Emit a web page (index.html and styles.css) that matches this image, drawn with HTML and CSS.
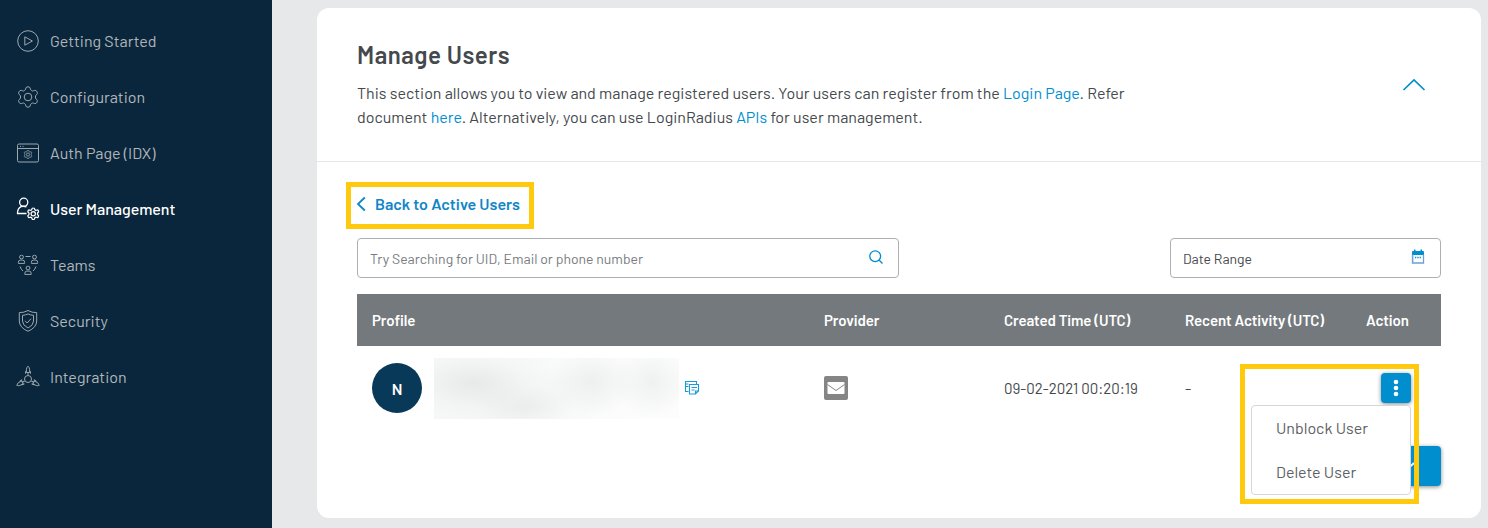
FILE: index.html
```html
<!DOCTYPE html>
<html lang="en">
<head>
<meta charset="utf-8">
<title>Manage Users</title>
<link rel="stylesheet" href="styles.css">
</head>
<body>
<svg class="defs" width="0" height="0">
  <symbol id="gear" viewBox="-11 -11 22 22">
    <path d="M-2.9-7Q-2.3-7.6-2.1-9Q-1.8-10.2 0-10.2T2.1-9Q2.3-7.6 2.9-7T4.6-6Q5.4-6 6.7-6.6T9-5.2T8.8-2.6Q7.7-1.8 7.5-1V1Q7.7 1.8 8.8 2.6T9 5.2T6.7 6.6Q5.4 6 4.6 6T2.9 7Q2.3 7.6 2.1 9Q1.8 10.2 0 10.2T-2.1 9Q-2.3 7.6-2.9 7T-4.6 6Q-5.4 6-6.7 6.6T-9 5.2T-8.8 2.6Q-7.7 1.8-7.5 1V-1Q-7.7-1.8-8.8-2.6T-9-5.2T-6.7-6.6Q-5.4-6-4.6-6T-2.9-7Z"/>
    <circle r="3.8"/>
  </symbol>
  <symbol id="person" viewBox="0 0 8 10"><circle cx="4" cy="2.5" r="1.9"/><path d="M.8 8.900V8q0-2.400 2-2.400h2.400q2 0 2 2.400v.9z"/></symbol>
  <symbol id="rocket" viewBox="0 0 6 10"><path d="M3 .7Q1.400 2 1.400 4v3h3.200V4Q4.600 2 3 .7zM1.400 5L.5 6.200v2M4.600 5l.9 1.200v2M3 7v2.600"/></symbol>
</svg>
<div class="app">
  <nav class="sidebar">
    <a class="nav-item"><svg class="nav-icon" viewBox="0 0 24 24"><circle cx="12" cy="12" r="10.300"/><path d="M8.800 7.800v8.400l7.600-4.200z"/></svg><span>Getting Started</span></a>
    <a class="nav-item"><svg class="nav-icon" viewBox="0 0 24 24"><use href="#gear" x="1" y="1" width="22" height="22"/></svg><span>Configuration</span></a>
    <a class="nav-item"><svg class="nav-icon" viewBox="0 0 24 24"><rect x="1.500" y="3" width="21" height="18" rx="1.500"/><path d="M2 7.500h20M4 5.400h1M6.500 5.400h1"/><use class="bold" href="#gear" x="7.500" y="9" width="9" height="9"/></svg><span>Auth Page (IDX)</span></a>
    <a class="nav-item active"><svg class="nav-icon" viewBox="0 0 24 24"><circle cx="7.700" cy="5.300" r="4.100"/><path d="M10.500 16.500h-9q0-5 3.500-6.800 2.700-1 5.500.3"/><use class="bold" href="#gear" x="11" y="10.500" width="12.500" height="12.500"/></svg><span>User Management</span></a>
    <a class="nav-item"><svg class="nav-icon" viewBox="0 0 24 24"><use href="#person" x="1.500" y="1.500" width="8" height="10"/><use href="#person" x="14.500" y="1.500" width="8" height="10"/><use href="#person" x="8" y="12.500" width="8" height="10"/><path d="M9.500 3.500h5M4 13.500q1 3 3 4.500M20 13.500q-1 3-3 4.500"/></svg><span>Teams</span></a>
    <a class="nav-item"><svg class="nav-icon" viewBox="0 0 24 24"><path d="M12 1.500q4 2.300 8.700 2.100v8.400q0 6.500-8.700 10.300Q3.300 18.500 3.300 12V3.600Q8 3.800 12 1.500z"/><path d="M12 4.900q2.700 1.400 5.500 1.400V12q0 4.300-5.500 7-5.500-2.700-5.500-7V6.300Q9.300 6.300 12 4.900zM9 11.800l2.200 2.200 3.800-4.300"/></svg><span>Security</span></a>
    <a class="nav-item"><svg class="nav-icon" viewBox="0 0 24 24"><circle cx="12" cy="14" r="3.500"/><use href="#rocket" x="9" y=".5" width="6" height="10"/><use href="#rocket" x="9" y=".5" width="6" height="10" transform="rotate(120 12 14)"/><use href="#rocket" x="9" y=".5" width="6" height="10" transform="rotate(240 12 14)"/></svg><span>Integration</span></a>
  </nav>
  <main class="content">
    <section class="card">
      <header class="card-header">
        <div class="intro">
          <h1>Manage Users</h1>
          <p><span class="line">This section allows you to view and manage registered users. Your users can register from the <a>Login Page</a>. Refer</span>
          <span class="line">document <a>here</a>. Alternatively, you can use LoginRadius <a>APIs</a> for user management.</span></p>
        </div>
        <svg class="collapse" viewBox="0 0 24 14"><path d="M1.500 12L12 2l10.500 10"/></svg>
      </header>
      <div class="card-body">
        <a class="back"><svg viewBox="0 0 10 16"><path d="M8.800 1.500L2 8l6.800 6.500"/></svg><span>Back to Active Users</span></a>
        <div class="filters">
          <div class="field search"><span>Try Searching for UID, Email or phone number</span><svg viewBox="0 0 16 16"><circle cx="7.200" cy="7.200" r="5.400"/><path d="M11.200 11.200l3.300 3.300"/></svg></div>
          <div class="field date"><span>Date Range</span><svg viewBox="0 0 16 16"><path class="solid" d="M3 2h10q1 0 1 1v3H3.200v7h-1.200V3q0-1 1-1zM4 .5h1.500V3H4zM10.500.5H12V3h-1.500z"/><path class="frame" d="M2.500 5.500v8.500h11V5.500"/><path d="M5 8.500h1.300M7.300 8.500h1.300M9.600 8.500h1.300"/></svg></div>
        </div>
        <div class="row head">
          <b>Profile</b><b>Provider</b><b>Created Time (UTC)</b><b>Recent Activity (UTC)</b><b>Action</b>
        </div>
        <div class="row user">
          <div class="profile">
            <span class="avatar">N</span><span class="redacted"></span>
            <svg class="copy" viewBox="0 0 16 16"><path d="M4.500 11.500h-3V1.500h11v2.500M2 4h2.500M2 6.500h2.500M5.500 4.500h9v6.500l-3 3h-6zM14.500 11h-3v3M7.500 7.500h5.500M7.500 10h3"/></svg>
          </div>
          <div><svg class="mail" viewBox="0 0 24 24"><rect class="tile" width="24" height="24" rx="2"/><rect class="paper" x="3.500" y="6" width="17" height="12" rx="1"/><path d="M3.500 8.500l8.500 6 8.500-6"/></svg></div>
          <div class="created">09-02-2021 00:20:19</div>
          <div>-</div>
          <div class="action">
            <button class="kebab"><svg viewBox="0 0 30 30"><circle cx="15" cy="9" r="2.300"/><circle cx="15" cy="15" r="2.300"/><circle cx="15" cy="21" r="2.300"/></svg></button>
            <div class="menu"><span>Unblock User</span><span>Delete User</span></div>
            <div class="highlight"></div>
          </div>
        </div>
        <div class="footer"><button class="next"><svg viewBox="0 0 16 16"><path d="M2 5l6 5.500L14 5"/></svg></button></div>
      </div>
    </section>
  </main>
</div>
</body>
</html>
```

FILE: styles.css
```css
* { box-sizing: border-box; }
body { margin: 0; font: 16px/24px Barlow, Roboto, sans-serif; color: #44494d; background: #e7e8ea; overflow: hidden; }
svg { fill: none; stroke: currentColor; flex: none; display: block; }
.defs { position: absolute; }
.app { display: flex; height: 528px; }
.sidebar { width: 272px; flex: none; background: #0a263d; padding-top: 13px; }
.nav-item { display: flex; align-items: center; height: 56px; padding-left: 16px; gap: 10px; color: #b1b6b9; white-space: nowrap; }
.nav-icon { width: 24px; height: 24px; stroke-width: 1; stroke: #9ca7ae; }
.bold { stroke-width: 2; }
.active { color: #fff; font-weight: 500; letter-spacing: -.04px; }
.active .nav-icon { stroke: #fff; stroke-width: 1.3; }
.active .bold { stroke-width: 2.2; }
.content { flex: 1; padding: 8px 7px 10px 45px; }
.card { height: 510px; background: #fff; border-radius: 12px; }
.card-header { height: 154px; padding: 31px 55px 0 40px; border-bottom: 1px solid #e5e6e7; display: flex; justify-content: space-between; }
h1 { margin: 0 0 11px; font-size: 24px; line-height: 31px; font-weight: 600; letter-spacing: .5px; }
p { margin: 0; }
.line { display: block; width: max-content; }
a { color: #008ecf; }
.nav-item.active { color: #fff; }
.collapse { width: 24px; height: 14px; margin-top: 39px; stroke: #008ecf; stroke-width: 1.7; }
.card-body { padding: 20px 40px 0; }
.back { display: flex; align-items: center; gap: 9px; width: 188px; height: 47px; margin-left: -11px; padding: 0 0 4px 5px; border: 5px solid #ffc90e; color: #0f86c8; font-weight: 600; white-space: nowrap; }
.back svg { width: 10px; height: 16px; stroke-width: 1.8; margin-top: 1px; }
.filters { display: flex; justify-content: space-between; margin-top: 9px; }
.field { display: flex; align-items: center; justify-content: space-between; height: 40px; padding: 2px 14px 0 12px; border: 1px solid #adb0b3; border-radius: 4px; font-size: 14px; white-space: nowrap; }
.search { width: 542px; color: #777c80; }
.date { width: 271px; }
.field svg { width: 16px; height: 16px; margin-top: -4px; color: #008ecf; stroke-width: 1.3; }
.field .solid { fill: currentColor; stroke: none; }
.field .frame { stroke: #6c9fd8; }
.row { display: grid; grid-template-columns: 452px 180px 181px 181px 1fr; align-items: center; padding-left: 15px; white-space: nowrap; }
.head { height: 52px; margin-top: 16px; background: #74797d; color: #fff; }
.row b { font-weight: 600; font-size: 15px; letter-spacing: -.07px; }
.user { height: 84px; }
.profile { display: flex; align-items: center; }
.avatar { width: 50px; height: 50px; border-radius: 50%; background: #083958; color: #fff; font-weight: 600; line-height: 51px; text-align: center; }
.redacted { width: 245px; height: 61px; margin: 0 5px 0 12px; background: radial-gradient(ellipse 110px 50px at 40px 25px, #d9dcdc88, #e9ebeb44 50%, transparent), radial-gradient(ellipse 90px 40px at 90px 48px, #dfe1e188, #eeefef33 55%, transparent), radial-gradient(ellipse 45px 34px at 158px 24px, #e0e2e280, transparent), radial-gradient(ellipse 40px 36px at 218px 24px, #e2e4e480, transparent), linear-gradient(90deg, #f8f9f9, #fdfdfd); }
.copy { width: 16px; height: 16px; color: #1c9bd7; stroke-width: 1.1; }
.mail { width: 24px; height: 24px; stroke: #858585; }
.tile { fill: #858585; stroke: none; }
.paper { fill: #fff; stroke: none; }
.created { font-size: 15px; }
.action { position: relative; display: flex; justify-content: flex-end; padding-right: 30px; }
button { padding: 0; border: 0; background: #008ecf; color: #fff; border-radius: 4px; box-shadow: 0 1px 4px #0007; }
.kebab { width: 30px; height: 30px; }
.kebab svg { fill: #fff; stroke: none; }
.menu { position: absolute; z-index: 1; top: 32px; right: 30px; width: 160px; height: 90px; background: #fff; border: 1px solid #d4d6d8; border-radius: 4px; padding-left: 24px; display: flex; flex-direction: column; color: #5c6165; }
.menu span { line-height: 44px; width: max-content; }
.highlight { position: absolute; z-index: 2; top: -9px; right: 22px; width: 179px; height: 140px; border: 5px solid #ffc90e; }
.footer { display: flex; justify-content: flex-end; margin-top: 16px; }
.next { width: 80px; height: 40px; display: flex; align-items: center; justify-content: flex-end; padding-right: 25px; }
.next svg { width: 16px; height: 16px; stroke-width: 1.7; }
```
